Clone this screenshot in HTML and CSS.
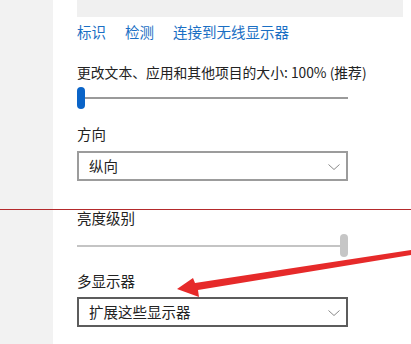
FILE: index.html
```html
<!DOCTYPE html>
<html lang="zh-CN">
<head>
<meta charset="utf-8">
<link rel="stylesheet" href="styles.css">
</head>
<body>
<div class="page">
  <aside class="sidebar"></aside>
  <main class="main">
    <div class="topbar"></div>
    <nav class="links">
      <span class="link">标识</span>
      <span class="link">检测</span>
      <span class="link">连接到无线显示器</span>
    </nav>
    <div class="label label-first">更改文本、应用和其他项目的大小: 100% (推荐)</div>
    <div class="slider slider-scale">
      <div class="track"></div>
      <div class="thumb thumb-blue"></div>
    </div>
    <div class="label label-orient">方向</div>
    <div class="dropdown">
      <span class="dd-text">纵向</span>
      <svg class="chev" width="14" height="8" viewBox="0 0 14 8"><path d="M1.5 1.5 L7 6.5 L12.5 1.5" fill="none" stroke="#8a8a8a" stroke-width="1"/></svg>
    </div>
    <div class="label label-bright">亮度级别</div>
    <div class="slider slider-bright">
      <div class="track track-light"></div>
      <div class="thumb thumb-gray"></div>
    </div>
    <div class="label label-multi">多显示器</div>
    <div class="dropdown dropdown-dark">
      <span class="dd-text">扩展这些显示器</span>
      <svg class="chev" width="14" height="8" viewBox="0 0 14 8"><path d="M1.5 1.5 L7 6.5 L12.5 1.5" fill="none" stroke="#8a8a8a" stroke-width="1"/></svg>
    </div>
  </main>
  <div class="redline"></div>
  <svg class="arrow" width="411" height="344" viewBox="0 0 411 344">
    <polygon points="177,289 193,278 195,283 411,250 411,255 198,290 199,297" fill="#e62a2a"/>
  </svg>
</div>
</body>
</html>
```
FILE: styles.css
```css
html, body {
  margin: 0;
  padding: 0;
  background: #ffffff;
}
body {
  font-family: "Noto Sans CJK SC", "Noto Sans", sans-serif;
  color: #222222;
}
.page {
  position: relative;
  display: flex;
  width: 411px;
  height: 344px;
  overflow: hidden;
}
.sidebar {
  width: 53px;
  flex: none;
  background: #f2f2f2;
}
.main {
  padding-left: 24px;
  display: flex;
  flex-direction: column;
  align-items: flex-start;
}
.topbar {
  width: 326px;
  height: 17px;
  background: #f0f0f0;
}
.links {
  margin-top: 5px;
  display: flex;
  gap: 19px;
  font-size: 14.5px;
  line-height: 20px;
  height: 20px;
}
.link {
  color: #1a6fc4;
}
.label {
  font-size: 14.5px;
  line-height: 20px;
  height: 20px;
  white-space: nowrap;
}
.label-first { margin-top: 20px; font-size: 13.8px; }
.label-orient { margin-top: 15px; }
.label-bright { margin-top: 27px; }
.label-multi { margin-top: 14px; }
.slider {
  position: relative;
  width: 271px;
  display: flex;
  align-items: center;
}
.slider-scale { margin-top: 5px; height: 22px; }
.slider-bright { margin-top: 6px; height: 23px; justify-content: flex-end; }
.track {
  position: absolute;
  left: 0;
  right: 0;
  top: 50%;
  height: 2px;
  margin-top: -1px;
  background: #9a9a9a;
}
.track-light {
  background: #c4c4c4;
  right: 4px;
}
.thumb {
  position: relative;
  width: 8px;
  height: 100%;
  border-radius: 4px;
}
.thumb-blue { background: #0a64c8; }
.thumb-gray { background: #c6c6c6; }
.dropdown {
  box-sizing: border-box;
  width: 271px;
  height: 30px;
  margin-top: 7px;
  border: 2px solid #9c9c9c;
  display: flex;
  align-items: center;
  justify-content: space-between;
  padding: 0 4px 0 10px;
}
.dropdown-dark {
  margin-top: 6px;
  border-color: #5c5c5c;
}
.dd-text {
  font-size: 14.5px;
  line-height: 20px;
  color: #222222;
}
.chev {
  margin-right: 1px;
  margin-top: 1px;
}
.redline {
  position: absolute;
  left: 0;
  top: 209px;
  width: 411px;
  height: 1px;
  background: #b42a2c;
}
.arrow {
  position: absolute;
  left: 0;
  top: 0;
  pointer-events: none;
}
```
